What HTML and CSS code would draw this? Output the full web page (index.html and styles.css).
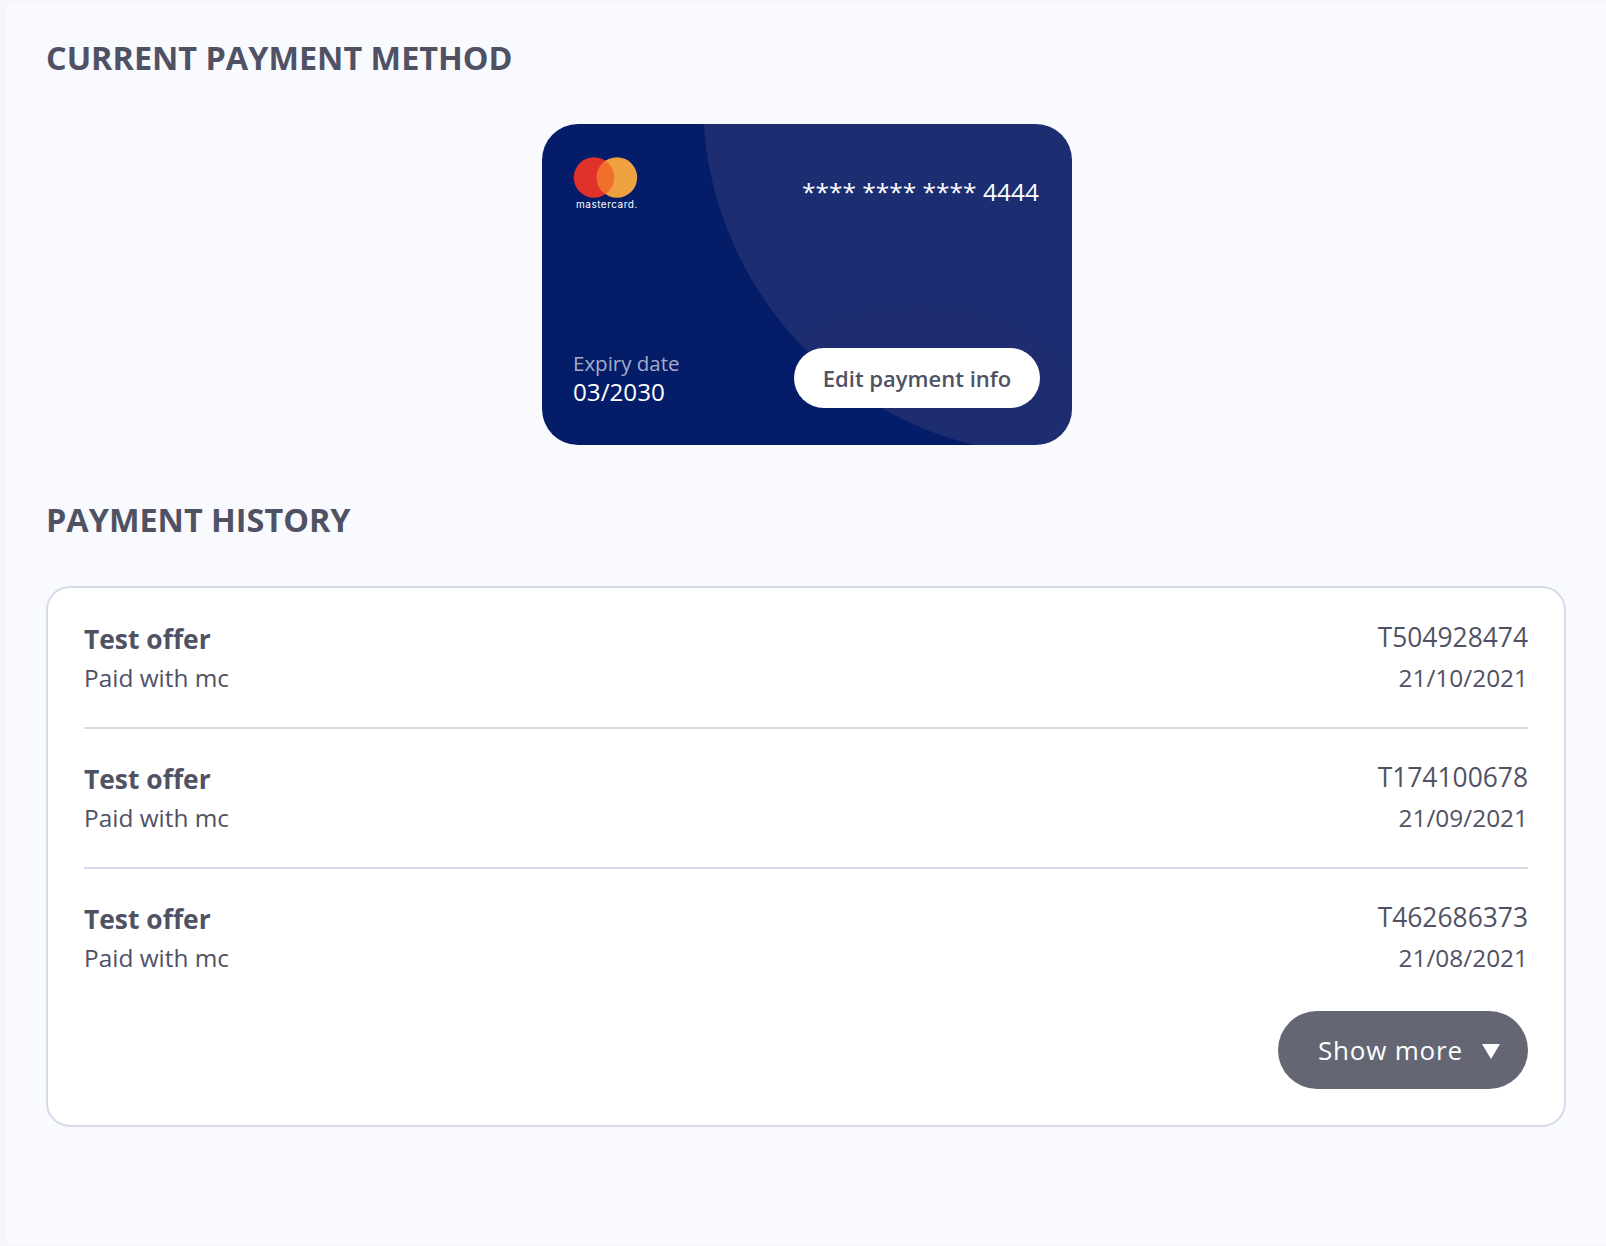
FILE: index.html
```html
<!DOCTYPE html>
<html lang="en">
<head>
    <meta charset="UTF-8">
    <meta name="viewport" content="width=device-width, initial-scale=1.0">
    <title>Payment</title>
    <link rel="stylesheet" href="styles.css">
</head>
<body>

    <main class="container">
        <h2 class="section-title">CURRENT PAYMENT METHOD</h2>

        <div class="card">
            <svg class="card-bg" width="530" height="321" viewBox="0 0 530 321">
                <clipPath id="curve">
                    <path d="M162 0A355 355 0 0 0 431 320H530V0Z"/>
                </clipPath>
                <ellipse cx="375" cy="325" rx="190" ry="145" fill="#232a6c" opacity="0.35" clip-path="url(#curve)"/>
            </svg>

            <div class="card-top">
                <div class="brand">
                    <svg width="65" height="41" viewBox="0 0 65 41">
                        <circle cx="21" cy="20.5" r="20.2" fill="#e0312b"/>
                        <circle cx="44" cy="20.5" r="20.2" fill="#eda13f"/>
                        <path d="M32.5 3.8a20.2 20.2 0 0 1 0 33.4a20.2 20.2 0 0 1 0-33.4Z" fill="#f26e2c"/>
                    </svg>
                    <span class="brand-name">mastercard.</span>
                </div>
                <div class="card-number">**** **** **** 4444</div>
            </div>

            <div class="card-bottom">
                <div class="expiry">
                    <div class="expiry-label">Expiry date</div>
                    <div class="expiry-value">03/2030</div>
                </div>
                <button class="edit-btn">Edit payment info</button>
            </div>
        </div>

        <h2 class="section-title history-title">PAYMENT HISTORY</h2>

        <div class="history">
            <div class="payment">
                <div>
                    <div class="offer">Test offer</div>
                    <div class="paid">Paid with mc</div>
                </div>
                <div class="payment-right">
                    <div class="ref">T504928474</div>
                    <div class="date">21/10/2021</div>
                </div>
            </div>
            <div class="payment">
                <div>
                    <div class="offer">Test offer</div>
                    <div class="paid">Paid with mc</div>
                </div>
                <div class="payment-right">
                    <div class="ref">T174100678</div>
                    <div class="date">21/09/2021</div>
                </div>
            </div>
            <div class="payment">
                <div>
                    <div class="offer">Test offer</div>
                    <div class="paid">Paid with mc</div>
                </div>
                <div class="payment-right">
                    <div class="ref">T462686373</div>
                    <div class="date">21/08/2021</div>
                </div>
            </div>

            <div class="more-row">
                <button class="more-btn">Show more <span class="arrow"></span></button>
            </div>
        </div>
    </main>

</body>
</html>
```
FILE: styles.css
```css
* {
    box-sizing: border-box;
}
html, body {
    height: 100%;
}
body {
    margin: 0;
    padding: 2px 0 1px 6px;
    background-color: #f6f7fa;
    font-family: "Open Sans", sans-serif;
    color: #505264;
}
.container {
    height: 100%;
    background-color: #f9fafe;
    padding: 33px 40px 0 40px;
}
.section-title {
    margin: 0;
    font-size: 32.4px;
    line-height: 44px;
    font-weight: 700;
}
.card {
    position: relative;
    width: 530px;
    height: 321px;
    margin: 45px 0 0 496px;
    padding: 33px 32px 26px 31px;
    border-radius: 36px;
    background: radial-gradient(circle at 516px -24px, #1c2d72 354.5px, #051d69 355.5px);
    overflow: hidden;
    display: flex;
    flex-direction: column;
    justify-content: space-between;
    color: white;
}
.card-bg {
    position: absolute;
    left: 0;
    top: 0;
}
.card-top, .card-bottom {
    position: relative;
    display: flex;
    justify-content: space-between;
}
.brand {
    display: flex;
    flex-direction: column;
    width: 65px;
}
.brand svg {
    display: block;
}
.brand-name {
    font-family: Inter, sans-serif;
    font-size: 10px;
    line-height: 11px;
    letter-spacing: 0.5px;
    margin-left: 3px;
    margin-top: 1px;
    white-space: nowrap;
}
.card-number {
    font-size: 24.5px;
    line-height: 30px;
    margin: 20px 1px 0 0;
}
.card-bottom {
    align-items: flex-end;
}
.expiry {
    margin-bottom: 12px;
}
.expiry-label {
    font-size: 20.5px;
    line-height: 28px;
    color: #a5acc7;
}
.expiry-value {
    font-size: 24.2px;
    line-height: 30px;
}
.edit-btn {
    width: 246px;
    height: 60px;
    margin: 0 0 11px 0;
    border: none;
    border-radius: 30px;
    background-color: white;
    color: #505264;
    font-family: "Open Sans", sans-serif;
    font-size: 22px;
    font-weight: 600;
}
.history-title {
    margin-top: 52px;
}
.history {
    margin-top: 45px;
    height: 541px;
    padding: 1px 36px 0;
    background-color: white;
    border: 2px solid #d5dbe7;
    border-radius: 24px;
}
.payment {
    height: 140px;
    padding-top: 32px;
    display: flex;
    justify-content: space-between;
    border-bottom: 2px solid #d5dbe7;
}
.payment:nth-child(3) {
    border-bottom: none;
    height: 142px;
}
.offer {
    font-size: 26.4px;
    line-height: 36px;
    font-weight: 700;
}
.paid {
    font-size: 24.4px;
    line-height: 42px;
}
.payment-right {
    margin-top: -3px;
    text-align: right;
}
.ref {
    font-size: 26.4px;
    line-height: 38px;
}
.date {
    font-size: 24.4px;
    line-height: 44px;
}
.more-row {
    display: flex;
    justify-content: flex-end;
}
.more-btn {
    width: 250px;
    height: 78px;
    padding: 0 0 1px 40px;
    display: flex;
    align-items: center;
    border: none;
    border-radius: 39px;
    background-color: #646674;
    color: white;
    font-family: "Open Sans", sans-serif;
    font-size: 26px;
    letter-spacing: 0.8px;
}
.arrow {
    width: 0;
    height: 0;
    margin: 3px 0 0 19px;
    border-left: 9px solid transparent;
    border-right: 9px solid transparent;
    border-top: 15px solid white;
}
```
